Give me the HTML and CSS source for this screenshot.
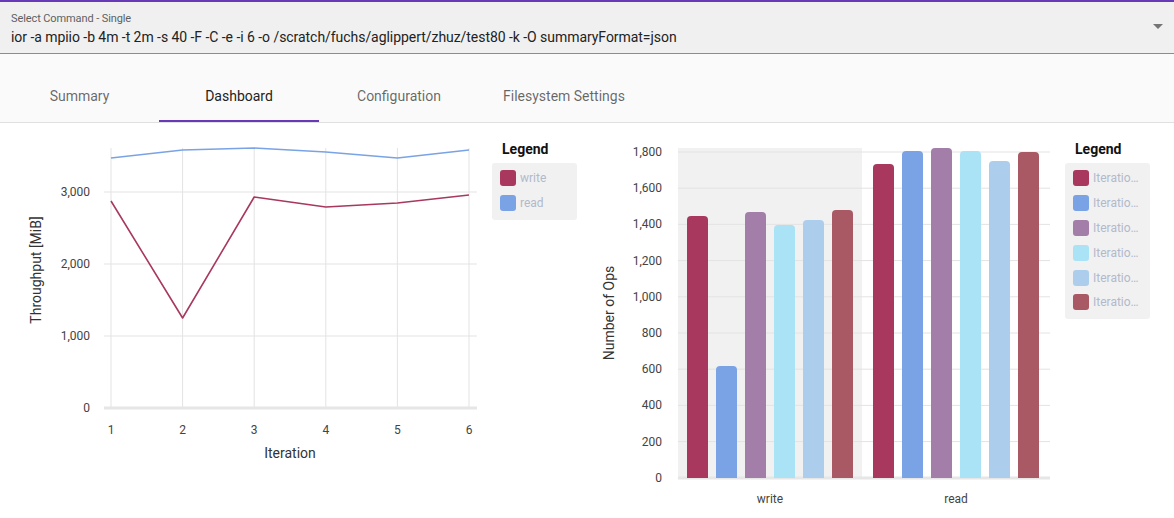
FILE: index.html
```html
<!DOCTYPE html>
<html>
<head>
<meta charset="utf-8">
<link rel="stylesheet" href="styles.css">
</head>
<body>
<div class="app">
  <header class="select-box">
    <div class="select-text">
      <div class="select-label">Select Command - Single</div>
      <div class="select-value">ior -a mpiio -b 4m -t 2m -s 40 -F -C -e -i 6 -o /scratch/fuchs/aglippert/zhuz/test80 -k -O summaryFormat=json</div>
    </div>
    <div class="select-arrow"></div>
  </header>
  <nav class="tabs">
    <div class="tab">Summary</div>
    <div class="tab active">Dashboard</div>
    <div class="tab">Configuration</div>
    <div class="tab">Filesystem Settings</div>
  </nav>
  <main class="charts">
    <svg class="chart chart-line" width="485" height="390" viewBox="0 0 485 390">
      <g class="grid">
        <line x1="111" y1="25" x2="111" y2="285"/>
        <line x1="182.6" y1="25" x2="182.6" y2="285"/>
        <line x1="254.2" y1="25" x2="254.2" y2="285"/>
        <line x1="325.8" y1="25" x2="325.8" y2="285"/>
        <line x1="397.4" y1="25" x2="397.4" y2="285"/>
        <line x1="469" y1="25" x2="469" y2="285"/>
        <line x1="104" y1="69" x2="477" y2="69"/>
        <line x1="104" y1="141" x2="477" y2="141"/>
        <line x1="104" y1="213" x2="477" y2="213"/>
      </g>
      <line class="zero" x1="104" y1="285" x2="477" y2="285"/>
      <g class="ytick">
        <text x="90" y="73">3,000</text>
        <text x="90" y="145">2,000</text>
        <text x="90" y="217">1,000</text>
        <text x="90" y="289">0</text>
      </g>
      <g class="xtick">
        <text x="111" y="311">1</text>
        <text x="182.6" y="311">2</text>
        <text x="254.2" y="311">3</text>
        <text x="325.8" y="311">4</text>
        <text x="397.4" y="311">5</text>
        <text x="469" y="311">6</text>
      </g>
      <text class="axis-title" x="290" y="335">Iteration</text>
      <text class="axis-title" transform="translate(41 147) rotate(-90)">Throughput [MiB]</text>
      <polyline class="series read" points="111,35 182.6,27 254.2,25 325.8,29 397.4,35 469,27"/>
      <polyline class="series write" points="111,78 182.6,195 254.2,74 325.8,84 397.4,80 469,72"/>
    </svg>
    <aside class="legend legend-small">
      <div class="legend-title">Legend</div>
      <ul class="legend-box">
        <li><span class="swatch c1"></span><span class="legend-label">write</span></li>
        <li><span class="swatch c2"></span><span class="legend-label">read</span></li>
      </ul>
    </aside>
    <svg class="chart chart-bar" width="470" height="390" viewBox="0 0 470 390">
      <rect class="hover-band" x="88" y="25" width="184" height="330"/>
      <g class="grid">
        <line x1="88" y1="29" x2="460" y2="29"/>
        <line x1="88" y1="65.2" x2="460" y2="65.2"/>
        <line x1="88" y1="101.4" x2="460" y2="101.4"/>
        <line x1="88" y1="137.6" x2="460" y2="137.6"/>
        <line x1="88" y1="173.8" x2="460" y2="173.8"/>
        <line x1="88" y1="210" x2="460" y2="210"/>
        <line x1="88" y1="246.2" x2="460" y2="246.2"/>
        <line x1="88" y1="282.4" x2="460" y2="282.4"/>
        <line x1="88" y1="318.6" x2="460" y2="318.6"/>
      </g>
      <line class="zero" x1="88" y1="355" x2="460" y2="355"/>
      <g class="ytick">
        <text x="72" y="33">1,800</text>
        <text x="72" y="69.2">1,600</text>
        <text x="72" y="105.4">1,400</text>
        <text x="72" y="141.6">1,200</text>
        <text x="72" y="177.8">1,000</text>
        <text x="72" y="214">800</text>
        <text x="72" y="250.2">600</text>
        <text x="72" y="286.4">400</text>
        <text x="72" y="322.6">200</text>
        <text x="72" y="359">0</text>
      </g>
      <g class="bars">
        <path class="f1" d="M97,355 V97 Q97,93 101,93 H114 Q118,93 118,97 V355 Z"/>
        <path class="f2" d="M126,355 V247 Q126,243 130,243 H143 Q147,243 147,247 V355 Z"/>
        <path class="f3" d="M155,355 V93 Q155,89 159,89 H172 Q176,89 176,93 V355 Z"/>
        <path class="f4" d="M184,355 V106 Q184,102 188,102 H201 Q205,102 205,106 V355 Z"/>
        <path class="f5" d="M213,355 V101 Q213,97 217,97 H230 Q234,97 234,101 V355 Z"/>
        <path class="f6" d="M242,355 V91 Q242,87 246,87 H259 Q263,87 263,91 V355 Z"/>
        <path class="f1" d="M283,355 V45 Q283,41 287,41 H300 Q304,41 304,45 V355 Z"/>
        <path class="f2" d="M312,355 V32 Q312,28 316,28 H329 Q333,28 333,32 V355 Z"/>
        <path class="f3" d="M341,355 V29 Q341,25 345,25 H358 Q362,25 362,29 V355 Z"/>
        <path class="f4" d="M370,355 V32 Q370,28 374,28 H387 Q391,28 391,32 V355 Z"/>
        <path class="f5" d="M399,355 V42 Q399,38 403,38 H416 Q420,38 420,42 V355 Z"/>
        <path class="f6" d="M428,355 V33 Q428,29 432,29 H445 Q449,29 449,33 V355 Z"/>
      </g>
      <g class="xtick">
        <text x="180" y="380">write</text>
        <text x="366" y="380">read</text>
      </g>
      <text class="axis-title" transform="translate(24 190) rotate(-90)">Number of Ops</text>
    </svg>
    <aside class="legend legend-tall">
      <div class="legend-title">Legend</div>
      <ul class="legend-box">
        <li title="Iteration 1"><span class="swatch c1"></span><span class="legend-label">Iteratio…</span></li>
        <li title="Iteration 2"><span class="swatch c2"></span><span class="legend-label">Iteratio…</span></li>
        <li title="Iteration 3"><span class="swatch c3"></span><span class="legend-label">Iteratio…</span></li>
        <li title="Iteration 4"><span class="swatch c4"></span><span class="legend-label">Iteratio…</span></li>
        <li title="Iteration 5"><span class="swatch c5"></span><span class="legend-label">Iteratio…</span></li>
        <li title="Iteration 6"><span class="swatch c6"></span><span class="legend-label">Iteratio…</span></li>
      </ul>
    </aside>
  </main>
</div>
</body>
</html>
```
FILE: styles.css
```css
* { box-sizing: border-box; }
html, body { margin: 0; padding: 0; }
body {
  font-family: Roboto, "Liberation Sans", sans-serif;
  background: #ffffff;
  color: #222;
  width: 1174px;
  height: 518px;
  overflow: hidden;
}
.app { display: flex; flex-direction: column; }

.select-box {
  display: flex;
  align-items: center;
  height: 54px;
  background: #f0f0f0;
  border-top: 2px solid #673ab7;
  border-bottom: 1px solid #8c8c8c;
  padding: 0 11px 0 11px;
}
.select-text { flex: 1; display: flex; flex-direction: column; padding-top: 2px; }
.select-label {
  font-size: 11px;
  color: #5f5f5f;
  line-height: 13px;
  letter-spacing: -0.1px;
}
.select-value {
  font-size: 14px;
  color: #222;
  line-height: 18px;
  margin-top: 3px;
  white-space: nowrap;
  letter-spacing: -0.05px;
}
.select-arrow {
  width: 0; height: 0;
  border-left: 5px solid transparent;
  border-right: 5px solid transparent;
  border-top: 5px solid #757575;
  margin-top: -2px;
}

.tabs {
  display: flex;
  height: 69px;
  background: #fafafa;
  border-bottom: 1px solid #e0e0e0;
}
.tab {
  min-width: 160px;
  padding: 18px 24px 0 24px;
  display: flex;
  align-items: center;
  justify-content: center;
  font-size: 14px;
  color: rgba(0,0,0,0.6);
  border-bottom: 2px solid transparent;
}
.tab:first-child { min-width: 159px; }
.tab.active {
  color: #222;
  border-bottom-color: #673ab7;
}

.charts { display: flex; align-items: flex-start; }
.chart { display: block; flex: none; }
.chart text { font-family: Roboto, "Liberation Sans", sans-serif; }
.grid line { stroke: #e3e3e3; stroke-width: 1; }
.zero { stroke: #e6e6e6; stroke-width: 3; }
.ytick text { font-size: 12px; fill: #444; text-anchor: end; }
.xtick text { font-size: 12px; fill: #444; text-anchor: middle; }
.axis-title { font-size: 14px; fill: #333; text-anchor: middle; }
.series { fill: none; stroke-width: 1.6; stroke-linejoin: round; }
.series.read { stroke: #7aa3e5; }
.series.write { stroke: #a8385d; }
.hover-band { fill: #f1f1f1; }
.f1 { fill: #a8385d; }
.f2 { fill: #7aa3e5; }
.f3 { fill: #a27ea8; }
.f4 { fill: #aae3f5; }
.f5 { fill: #adcded; }
.f6 { fill: #a95963; }

.legend { flex: none; width: 85px; margin-top: 18px; }
.legend-small { margin-left: 7px; margin-right: 13px; }
.legend-tall { margin-left: 5px; margin-top: 18px; }
.legend-title {
  font-size: 14px;
  font-weight: 700;
  color: #111;
  padding-left: 10px;
  line-height: 16px;
  height: 22px;
}
.legend-box {
  list-style: none;
  margin: 0;
  padding: 3px 0 4px 8px;
  background: #f1f1f1;
  border-radius: 3px;
}
.legend-box li {
  display: flex;
  align-items: center;
  height: 24.8px;
}
.swatch {
  flex: none;
  width: 16px;
  height: 16px;
  border-radius: 3px;
  margin-right: 4px;
}
.c1 { background: #a8385d; }
.c2 { background: #7aa3e5; }
.c3 { background: #a27ea8; }
.c4 { background: #aae3f5; }
.c5 { background: #adcded; }
.c6 { background: #a95963; }
.legend-label {
  font-size: 12px;
  color: #b2b9cc;
  white-space: nowrap;
}
```
